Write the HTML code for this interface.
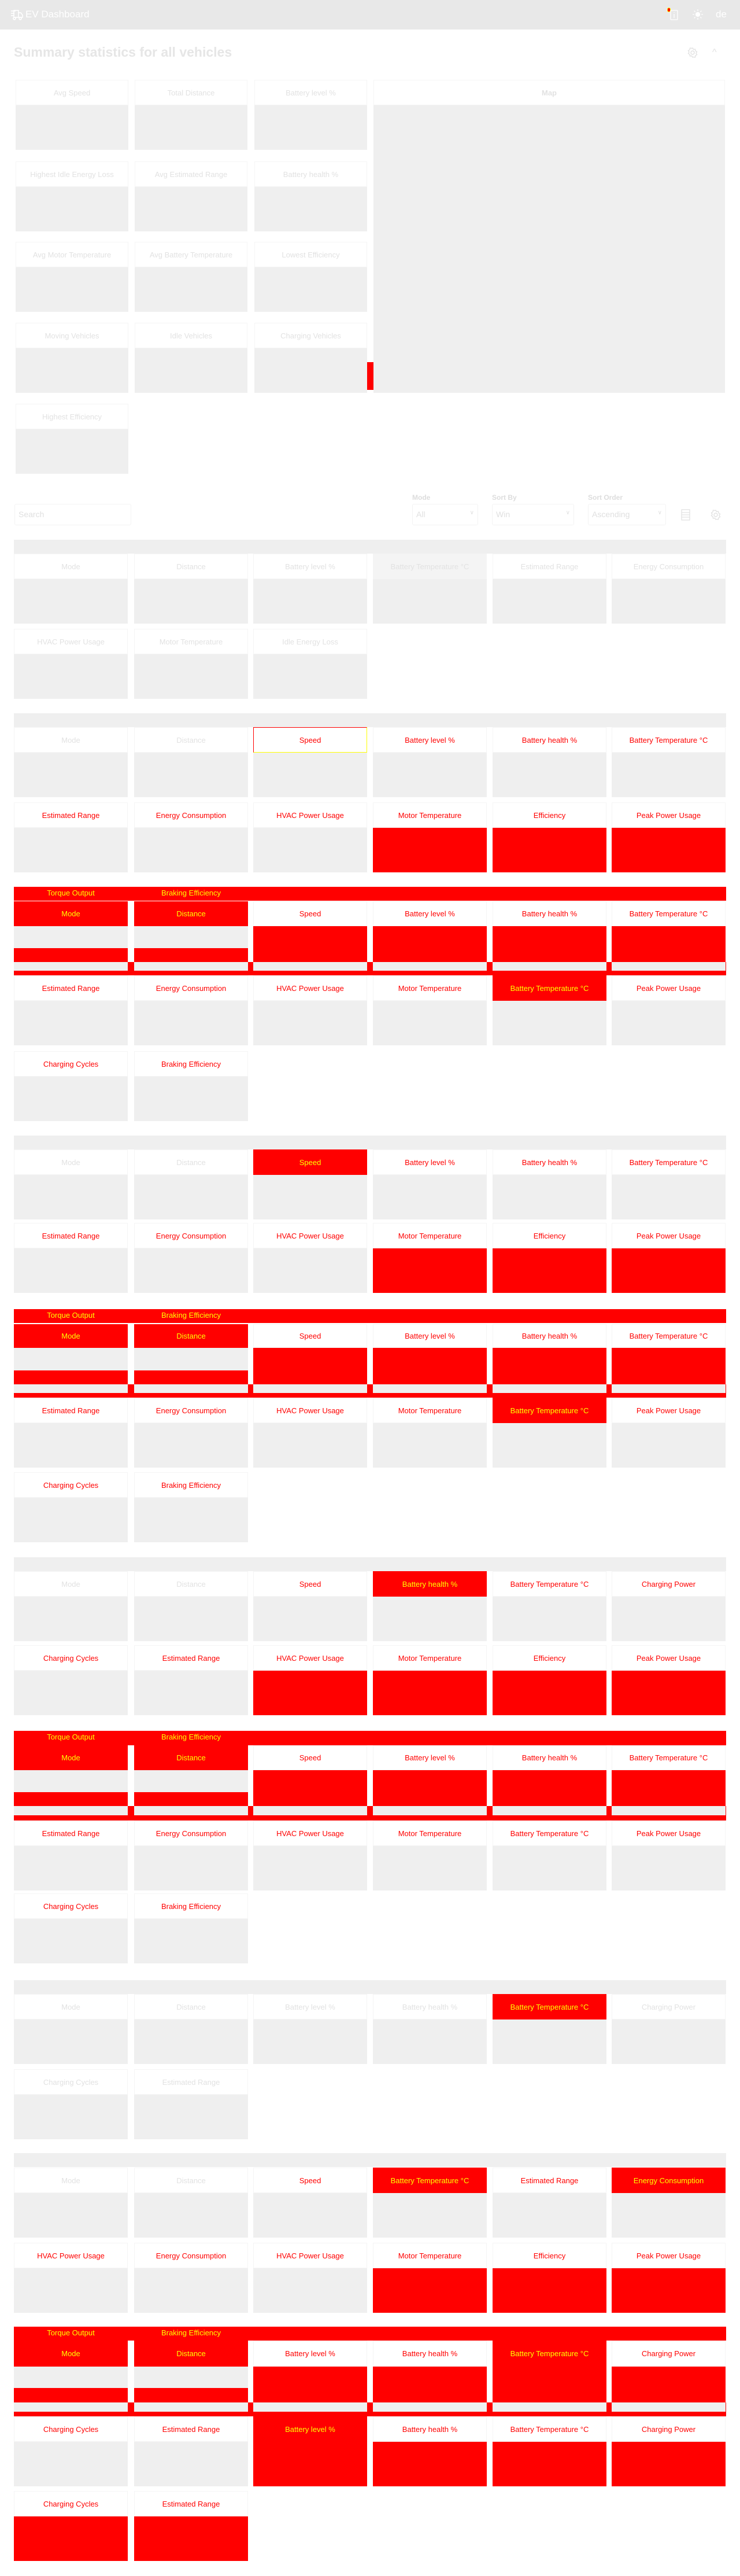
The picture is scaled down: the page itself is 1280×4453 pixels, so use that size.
<!DOCTYPE html>
<html><head><meta charset="utf-8">
<style>
*{box-sizing:border-box;margin:0;padding:0}
body{width:1280px;height:4453px;position:relative;background:#fff;font-family:"Liberation Sans",sans-serif;overflow:hidden}
.a{position:absolute}
.c{position:absolute;width:197px}
.h{height:44px;background:#fff;border:1px solid #f5f5f5;display:flex;align-items:center;justify-content:center;font-size:13px;color:#f00;white-space:nowrap;overflow:hidden}
.g{color:#e2e2e2}
.b{height:77px;background:#efefef}
.rh{background:#f00;color:#ff0;border-color:#f00}
.rb{background:#f00}
.band{position:absolute;left:24px;width:1232px;height:24px;background:#efefef}
.red{position:absolute;left:24px;width:1232px;background:#f00}
.lbl{position:absolute;font-size:12px;font-weight:bold;color:#ddd}
.inp{position:absolute;top:871px;height:37px;border:1px solid #f3f3f3;border-radius:3px;font-size:14px;color:#e0e0e0;padding:9px 6px}
</style></head><body>
<!-- top bar -->
<div class="a" style="left:0;top:0;width:1280px;height:51px;background:#e8e8e8"></div>
<svg class="a" style="left:18px;top:16px" width="22" height="20" viewBox="0 0 22 20" fill="none" stroke="#fff" stroke-width="1.6"><path d="M1 3h8M1 7h6M1 11h5M6 2h8v12H6zM14 6h4l3 4v4h-7"/><circle cx="7" cy="16" r="2"/><circle cx="17" cy="16" r="2"/></svg>
<div class="a" style="left:44px;top:15px;font-size:17px;color:#fff">EV Dashboard</div>
<div class="a" style="left:1154px;top:13px;width:6px;height:8px;border-radius:3px;background:#f00;border:1px solid #ff0"></div>
<svg class="a" style="left:1159px;top:17px" width="14" height="18" viewBox="0 0 14 18" fill="none" stroke="#fff" stroke-width="1.3"><rect x="1" y="1" width="12" height="16" rx="1"/><path d="M7 7v7M7 4v1"/></svg>
<svg class="a" style="left:1198px;top:16px" width="18" height="18" viewBox="0 0 18 18" fill="#fff" stroke="#fff" stroke-width="1.3"><circle cx="9" cy="9" r="3.5"/><path d="M9 0v3M9 15v3M0 9h3M15 9h3M2.6 2.6l2 2M13.4 13.4l2 2M2.6 15.4l2-2M13.4 4.6l2-2"/></svg>
<div class="a" style="left:1238px;top:15px;font-size:17px;color:#fff">de</div>

<!-- title -->
<div class="a" style="left:24px;top:77px;font-size:23px;font-weight:bold;color:#e6e6e6">Summary statistics for all vehicles</div>
<svg class="a" style="left:1189px;top:82px" width="18" height="18" viewBox="0 0 18 18" fill="none" stroke="#e2e2e2" stroke-width="1.4"><circle cx="9" cy="9" r="3"/><path d="M9 1l1.5 2.5 3-.5.5 3 2.5 1.5-1.5 2.5 1.5 2.5-2.5 1.5-.5 3-3-.5L9 17l-1.5-2.5-3 .5-.5-3L1.5 10.5 3 8 1.5 5.5 4 4l.5-3 3 .5z"/></svg>
<div class="a" style="left:1232px;top:82px;font-size:16px;color:#e2e2e2">^</div>

<!-- summary cards -->
<div class="c" style="left:27px;top:138px;width:195px"><div class="h g">Avg Speed</div><div class="b"></div></div>
<div class="c" style="left:233px;top:138px;width:195px"><div class="h g">Total Distance</div><div class="b"></div></div>
<div class="c" style="left:440px;top:138px;width:195px"><div class="h g">Battery level %</div><div class="b"></div></div>
<div class="c" style="left:27px;top:279px;width:195px"><div class="h g">Highest Idle Energy Loss</div><div class="b"></div></div>
<div class="c" style="left:233px;top:279px;width:195px"><div class="h g">Avg Estimated Range</div><div class="b"></div></div>
<div class="c" style="left:440px;top:279px;width:195px"><div class="h g">Battery health %</div><div class="b"></div></div>
<div class="c" style="left:27px;top:418px;width:195px"><div class="h g">Avg Motor Temperature</div><div class="b"></div></div>
<div class="c" style="left:233px;top:418px;width:195px"><div class="h g">Avg Battery Temperature</div><div class="b"></div></div>
<div class="c" style="left:440px;top:418px;width:195px"><div class="h g">Lowest Efficiency</div><div class="b"></div></div>
<div class="c" style="left:27px;top:558px;width:195px"><div class="h g">Moving Vehicles</div><div class="b"></div></div>
<div class="c" style="left:233px;top:558px;width:195px"><div class="h g">Idle Vehicles</div><div class="b"></div></div>
<div class="c" style="left:440px;top:558px;width:195px"><div class="h g">Charging Vehicles</div><div class="b"></div></div>
<div class="c" style="left:27px;top:698px;width:195px"><div class="h g">Highest Efficiency</div><div class="b"></div></div>
<div class="c" style="left:646px;top:138px;width:608px"><div class="h g" style="font-weight:bold">Map</div><div class="b" style="height:497px"></div></div>
<div class="a" style="left:635px;top:626px;width:11px;height:48px;background:#f00"></div>

<!-- controls -->
<div class="inp" style="left:25px;width:202px">Search</div>
<div class="lbl" style="left:713px;top:853px">Mode</div>
<div class="lbl" style="left:851px;top:853px">Sort By</div>
<div class="lbl" style="left:1017px;top:853px">Sort Order</div>
<div class="inp" style="left:713px;width:114px">All<span style="float:right;font-size:10px">&#8744;</span></div>
<div class="inp" style="left:851px;width:142px">Win<span style="float:right;font-size:10px">&#8744;</span></div>
<div class="inp" style="left:1017px;width:135px">Ascending<span style="float:right;font-size:10px">&#8744;</span></div>
<svg class="a" style="left:1178px;top:880px" width="16" height="20" viewBox="0 0 16 20" fill="none" stroke="#e2e2e2" stroke-width="1.3"><rect x="1" y="1" width="14" height="18"/><path d="M1 6h14M1 10h14M1 14h14"/></svg>
<svg class="a" style="left:1229px;top:881px" width="18" height="18" viewBox="0 0 18 18" fill="none" stroke="#e2e2e2" stroke-width="1.4"><circle cx="9" cy="9" r="3"/><path d="M9 1l1.5 2.5 3-.5.5 3 2.5 1.5-1.5 2.5 1.5 2.5-2.5 1.5-.5 3-3-.5L9 17l-1.5-2.5-3 .5-.5-3L1.5 10.5 3 8 1.5 5.5 4 4l.5-3 3 .5z"/></svg>

<!-- section 1 -->
<div class="band" style="top:933px"></div>
<div class="c" style="left:24px;top:957px"><div class="h g">Mode</div><div class="b"></div></div>
<div class="c" style="left:232px;top:957px"><div class="h g">Distance</div><div class="b"></div></div>
<div class="c" style="left:438px;top:957px"><div class="h g">Battery level %</div><div class="b"></div></div>
<div class="c" style="left:645px;top:957px"><div class="h g" style="background:#f4f4f4">Battery Temperature °C</div><div class="b"></div></div>
<div class="c" style="left:852px;top:957px"><div class="h g">Estimated Range</div><div class="b"></div></div>
<div class="c" style="left:1058px;top:957px"><div class="h g">Energy Consumption</div><div class="b"></div></div>
<div class="c" style="left:24px;top:1087px"><div class="h g">HVAC Power Usage</div><div class="b"></div></div>
<div class="c" style="left:232px;top:1087px"><div class="h g">Motor Temperature</div><div class="b"></div></div>
<div class="c" style="left:438px;top:1087px"><div class="h g">Idle Energy Loss</div><div class="b"></div></div>

<!-- section 2 T=1233 -->
<div class="band" style="top:1233px"></div>
<div class="c" style="left:24px;top:1257px"><div class="h g">Mode</div><div class="b"></div></div>
<div class="c" style="left:232px;top:1257px"><div class="h g">Distance</div><div class="b"></div></div>
<div class="c" style="left:438px;top:1257px"><div class="h" style="border-color:#f00 #ff0 #ff0 #f00">Speed</div><div class="b"></div></div>
<div class="c" style="left:645px;top:1257px"><div class="h">Battery level %</div><div class="b"></div></div>
<div class="c" style="left:852px;top:1257px"><div class="h">Battery health %</div><div class="b"></div></div>
<div class="c" style="left:1058px;top:1257px"><div class="h">Battery Temperature °C</div><div class="b"></div></div>
<div class="c" style="left:24px;top:1387px"><div class="h">Estimated Range</div><div class="b"></div></div>
<div class="c" style="left:232px;top:1387px"><div class="h">Energy Consumption</div><div class="b"></div></div>
<div class="c" style="left:438px;top:1387px"><div class="h">HVAC Power Usage</div><div class="b"></div></div>
<div class="c" style="left:645px;top:1387px"><div class="h">Motor Temperature</div><div class="b rb"></div></div>
<div class="c" style="left:852px;top:1387px"><div class="h">Efficiency</div><div class="b rb"></div></div>
<div class="c" style="left:1058px;top:1387px"><div class="h">Peak Power Usage</div><div class="b rb"></div></div>
<div class="red" style="top:1533px;height:24px"></div>
<div class="a" style="left:24px;top:1536px;width:197px;text-align:center;font-size:13px;color:#ff0">Torque Output</div>
<div class="a" style="left:232px;top:1536px;width:197px;text-align:center;font-size:13px;color:#ff0">Braking Efficiency</div>
<div class="red" style="top:1663px;height:23px"></div>
<div class="c" style="left:24px;top:1558px"><div class="h rh" style="height:43px">Mode</div><div class="b" style="height:38px"></div><div class="b rb" style="height:24px"></div><div class="b" style="height:15px"></div></div>
<div class="c" style="left:232px;top:1558px"><div class="h rh" style="height:43px">Distance</div><div class="b" style="height:38px"></div><div class="b rb" style="height:24px"></div><div class="b" style="height:15px"></div></div>
<div class="c" style="left:438px;top:1558px"><div class="h" style="height:43px">Speed</div><div class="b rb" style="height:62px"></div><div class="b" style="height:15px"></div></div>
<div class="c" style="left:645px;top:1558px"><div class="h" style="height:43px">Battery level %</div><div class="b rb" style="height:62px"></div><div class="b" style="height:15px"></div></div>
<div class="c" style="left:852px;top:1558px"><div class="h" style="height:43px">Battery health %</div><div class="b rb" style="height:62px"></div><div class="b" style="height:15px"></div></div>
<div class="c" style="left:1058px;top:1558px"><div class="h" style="height:43px">Battery Temperature °C</div><div class="b rb" style="height:62px"></div><div class="b" style="height:15px"></div></div>
<div class="c" style="left:24px;top:1686px"><div class="h">Estimated Range</div><div class="b"></div></div>
<div class="c" style="left:232px;top:1686px"><div class="h">Energy Consumption</div><div class="b"></div></div>
<div class="c" style="left:438px;top:1686px"><div class="h">HVAC Power Usage</div><div class="b"></div></div>
<div class="c" style="left:645px;top:1686px"><div class="h">Motor Temperature</div><div class="b"></div></div>
<div class="c" style="left:852px;top:1686px"><div class="h rh">Battery Temperature °C</div><div class="b"></div></div>
<div class="c" style="left:1058px;top:1686px"><div class="h">Peak Power Usage</div><div class="b"></div></div>
<div class="c" style="left:24px;top:1817px"><div class="h">Charging Cycles</div><div class="b"></div></div>
<div class="c" style="left:232px;top:1817px"><div class="h">Braking Efficiency</div><div class="b"></div></div>

<!-- section 3 T=1963 -->
<div class="band" style="top:1963px"></div>
<div class="c" style="left:24px;top:1987px"><div class="h g">Mode</div><div class="b"></div></div>
<div class="c" style="left:232px;top:1987px"><div class="h g">Distance</div><div class="b"></div></div>
<div class="c" style="left:438px;top:1987px"><div class="h rh">Speed</div><div class="b"></div></div>
<div class="c" style="left:645px;top:1987px"><div class="h">Battery level %</div><div class="b"></div></div>
<div class="c" style="left:852px;top:1987px"><div class="h">Battery health %</div><div class="b"></div></div>
<div class="c" style="left:1058px;top:1987px"><div class="h">Battery Temperature °C</div><div class="b"></div></div>
<div class="c" style="left:24px;top:2114px"><div class="h">Estimated Range</div><div class="b"></div></div>
<div class="c" style="left:232px;top:2114px"><div class="h">Energy Consumption</div><div class="b"></div></div>
<div class="c" style="left:438px;top:2114px"><div class="h">HVAC Power Usage</div><div class="b"></div></div>
<div class="c" style="left:645px;top:2114px"><div class="h">Motor Temperature</div><div class="b rb"></div></div>
<div class="c" style="left:852px;top:2114px"><div class="h">Efficiency</div><div class="b rb"></div></div>
<div class="c" style="left:1058px;top:2114px"><div class="h">Peak Power Usage</div><div class="b rb"></div></div>
<div class="red" style="top:2263px;height:24px"></div>
<div class="a" style="left:24px;top:2266px;width:197px;text-align:center;font-size:13px;color:#ff0">Torque Output</div>
<div class="a" style="left:232px;top:2266px;width:197px;text-align:center;font-size:13px;color:#ff0">Braking Efficiency</div>
<div class="red" style="top:2393px;height:23px"></div>
<div class="c" style="left:24px;top:2289px"><div class="h rh" style="height:41px">Mode</div><div class="b" style="height:39px"></div><div class="b rb" style="height:24px"></div><div class="b" style="height:15px"></div></div>
<div class="c" style="left:232px;top:2289px"><div class="h rh" style="height:41px">Distance</div><div class="b" style="height:39px"></div><div class="b rb" style="height:24px"></div><div class="b" style="height:15px"></div></div>
<div class="c" style="left:438px;top:2289px"><div class="h" style="height:41px">Speed</div><div class="b rb" style="height:63px"></div><div class="b" style="height:15px"></div></div>
<div class="c" style="left:645px;top:2289px"><div class="h" style="height:41px">Battery level %</div><div class="b rb" style="height:63px"></div><div class="b" style="height:15px"></div></div>
<div class="c" style="left:852px;top:2289px"><div class="h" style="height:41px">Battery health %</div><div class="b rb" style="height:63px"></div><div class="b" style="height:15px"></div></div>
<div class="c" style="left:1058px;top:2289px"><div class="h" style="height:41px">Battery Temperature °C</div><div class="b rb" style="height:63px"></div><div class="b" style="height:15px"></div></div>
<div class="c" style="left:24px;top:2416px"><div class="h">Estimated Range</div><div class="b"></div></div>
<div class="c" style="left:232px;top:2416px"><div class="h">Energy Consumption</div><div class="b"></div></div>
<div class="c" style="left:438px;top:2416px"><div class="h">HVAC Power Usage</div><div class="b"></div></div>
<div class="c" style="left:645px;top:2416px"><div class="h">Motor Temperature</div><div class="b"></div></div>
<div class="c" style="left:852px;top:2416px"><div class="h rh">Battery Temperature °C</div><div class="b"></div></div>
<div class="c" style="left:1058px;top:2416px"><div class="h">Peak Power Usage</div><div class="b"></div></div>
<div class="c" style="left:24px;top:2545px"><div class="h">Charging Cycles</div><div class="b"></div></div>
<div class="c" style="left:232px;top:2545px"><div class="h">Braking Efficiency</div><div class="b"></div></div>

<!-- section 4 T=2692 -->
<div class="band" style="top:2692px"></div>
<div class="c" style="left:24px;top:2716px"><div class="h g">Mode</div><div class="b"></div></div>
<div class="c" style="left:232px;top:2716px"><div class="h g">Distance</div><div class="b"></div></div>
<div class="c" style="left:438px;top:2716px"><div class="h">Speed</div><div class="b"></div></div>
<div class="c" style="left:645px;top:2716px"><div class="h rh">Battery health %</div><div class="b"></div></div>
<div class="c" style="left:852px;top:2716px"><div class="h">Battery Temperature °C</div><div class="b"></div></div>
<div class="c" style="left:1058px;top:2716px"><div class="h">Charging Power</div><div class="b"></div></div>
<div class="c" style="left:24px;top:2844px"><div class="h">Charging Cycles</div><div class="b"></div></div>
<div class="c" style="left:232px;top:2844px"><div class="h">Estimated Range</div><div class="b"></div></div>
<div class="c" style="left:438px;top:2844px"><div class="h">HVAC Power Usage</div><div class="b rb"></div></div>
<div class="c" style="left:645px;top:2844px"><div class="h">Motor Temperature</div><div class="b rb"></div></div>
<div class="c" style="left:852px;top:2844px"><div class="h">Efficiency</div><div class="b rb"></div></div>
<div class="c" style="left:1058px;top:2844px"><div class="h">Peak Power Usage</div><div class="b rb"></div></div>
<div class="red" style="top:2992px;height:25px"></div>
<div class="a" style="left:24px;top:2995px;width:197px;text-align:center;font-size:13px;color:#ff0">Torque Output</div>
<div class="a" style="left:232px;top:2995px;width:197px;text-align:center;font-size:13px;color:#ff0">Braking Efficiency</div>
<div class="red" style="top:3122px;height:25px"></div>
<div class="c" style="left:24px;top:3017px"><div class="h rh" style="height:43px">Mode</div><div class="b" style="height:38px"></div><div class="b rb" style="height:24px"></div><div class="b" style="height:16px"></div></div>
<div class="c" style="left:232px;top:3017px"><div class="h rh" style="height:43px">Distance</div><div class="b" style="height:38px"></div><div class="b rb" style="height:24px"></div><div class="b" style="height:16px"></div></div>
<div class="c" style="left:438px;top:3017px"><div class="h" style="height:43px">Speed</div><div class="b rb" style="height:62px"></div><div class="b" style="height:16px"></div></div>
<div class="c" style="left:645px;top:3017px"><div class="h" style="height:43px">Battery level %</div><div class="b rb" style="height:62px"></div><div class="b" style="height:16px"></div></div>
<div class="c" style="left:852px;top:3017px"><div class="h" style="height:43px">Battery health %</div><div class="b rb" style="height:62px"></div><div class="b" style="height:16px"></div></div>
<div class="c" style="left:1058px;top:3017px"><div class="h" style="height:43px">Battery Temperature °C</div><div class="b rb" style="height:62px"></div><div class="b" style="height:16px"></div></div>
<div class="c" style="left:24px;top:3147px"><div class="h">Estimated Range</div><div class="b" style="height:77px"></div></div>
<div class="c" style="left:232px;top:3147px"><div class="h">Energy Consumption</div><div class="b"></div></div>
<div class="c" style="left:438px;top:3147px"><div class="h">HVAC Power Usage</div><div class="b"></div></div>
<div class="c" style="left:645px;top:3147px"><div class="h">Motor Temperature</div><div class="b"></div></div>
<div class="c" style="left:852px;top:3147px"><div class="h">Battery Temperature °C</div><div class="b"></div></div>
<div class="c" style="left:1058px;top:3147px"><div class="h">Peak Power Usage</div><div class="b"></div></div>
<div class="c" style="left:24px;top:3273px"><div class="h">Charging Cycles</div><div class="b"></div></div>
<div class="c" style="left:232px;top:3273px"><div class="h">Braking Efficiency</div><div class="b"></div></div>

<!-- section 5 T=3423 -->
<div class="band" style="top:3423px"></div>
<div class="c" style="left:24px;top:3447px"><div class="h g">Mode</div><div class="b"></div></div>
<div class="c" style="left:232px;top:3447px"><div class="h g">Distance</div><div class="b"></div></div>
<div class="c" style="left:438px;top:3447px"><div class="h g">Battery level %</div><div class="b"></div></div>
<div class="c" style="left:645px;top:3447px"><div class="h g">Battery health %</div><div class="b"></div></div>
<div class="c" style="left:852px;top:3447px"><div class="h rh">Battery Temperature °C</div><div class="b"></div></div>
<div class="c" style="left:1058px;top:3447px"><div class="h g">Charging Power</div><div class="b"></div></div>
<div class="c" style="left:24px;top:3577px"><div class="h g">Charging Cycles</div><div class="b"></div></div>
<div class="c" style="left:232px;top:3577px"><div class="h g">Estimated Range</div><div class="b"></div></div>

<!-- section 6 T=3722 -->
<div class="band" style="top:3722px"></div>
<div class="c" style="left:24px;top:3747px"><div class="h g">Mode</div><div class="b"></div></div>
<div class="c" style="left:232px;top:3747px"><div class="h g">Distance</div><div class="b"></div></div>
<div class="c" style="left:438px;top:3747px"><div class="h">Speed</div><div class="b"></div></div>
<div class="c" style="left:645px;top:3747px"><div class="h rh">Battery Temperature °C</div><div class="b"></div></div>
<div class="c" style="left:852px;top:3747px"><div class="h">Estimated Range</div><div class="b"></div></div>
<div class="c" style="left:1058px;top:3747px"><div class="h rh">Energy Consumption</div><div class="b"></div></div>
<div class="c" style="left:24px;top:3877px"><div class="h">HVAC Power Usage</div><div class="b"></div></div>
<div class="c" style="left:232px;top:3877px"><div class="h">Energy Consumption</div><div class="b"></div></div>
<div class="c" style="left:438px;top:3877px"><div class="h">HVAC Power Usage</div><div class="b"></div></div>
<div class="c" style="left:645px;top:3877px"><div class="h">Motor Temperature</div><div class="b rb"></div></div>
<div class="c" style="left:852px;top:3877px"><div class="h">Efficiency</div><div class="b rb"></div></div>
<div class="c" style="left:1058px;top:3877px"><div class="h">Peak Power Usage</div><div class="b rb"></div></div>
<div class="red" style="top:4022px;height:24px"></div>
<div class="a" style="left:24px;top:4025px;width:197px;text-align:center;font-size:13px;color:#ff0">Torque Output</div>
<div class="a" style="left:232px;top:4025px;width:197px;text-align:center;font-size:13px;color:#ff0">Braking Efficiency</div>
<div class="red" style="top:4153px;height:24px"></div>
<div class="c" style="left:24px;top:4046px"><div class="h rh" style="height:45px">Mode</div><div class="b" style="height:37px"></div><div class="b rb" style="height:25px"></div><div class="b" style="height:16px"></div></div>
<div class="c" style="left:232px;top:4046px"><div class="h rh" style="height:45px">Distance</div><div class="b" style="height:37px"></div><div class="b rb" style="height:25px"></div><div class="b" style="height:16px"></div></div>
<div class="c" style="left:438px;top:4046px"><div class="h" style="height:45px">Battery level %</div><div class="b rb" style="height:62px"></div><div class="b" style="height:16px"></div></div>
<div class="c" style="left:645px;top:4046px"><div class="h" style="height:45px">Battery health %</div><div class="b rb" style="height:62px"></div><div class="b" style="height:16px"></div></div>
<div class="c" style="left:852px;top:4046px"><div class="h rh" style="height:45px">Battery Temperature °C</div><div class="b rb" style="height:62px"></div><div class="b" style="height:16px"></div></div>
<div class="c" style="left:1058px;top:4046px"><div class="h" style="height:45px">Charging Power</div><div class="b rb" style="height:62px"></div><div class="b" style="height:16px"></div></div>
<div class="c" style="left:24px;top:4177px"><div class="h">Charging Cycles</div><div class="b"></div></div>
<div class="c" style="left:232px;top:4177px"><div class="h">Estimated Range</div><div class="b"></div></div>
<div class="c" style="left:438px;top:4177px"><div class="h rh">Battery level %</div><div class="b rb"></div></div>
<div class="c" style="left:645px;top:4177px"><div class="h">Battery health %</div><div class="b rb"></div></div>
<div class="c" style="left:852px;top:4177px"><div class="h">Battery Temperature °C</div><div class="b rb"></div></div>
<div class="c" style="left:1058px;top:4177px"><div class="h">Charging Power</div><div class="b rb"></div></div>
<div class="c" style="left:24px;top:4306px"><div class="h">Charging Cycles</div><div class="b rb"></div></div>
<div class="c" style="left:232px;top:4306px"><div class="h">Estimated Range</div><div class="b rb"></div></div>
</body></html>
